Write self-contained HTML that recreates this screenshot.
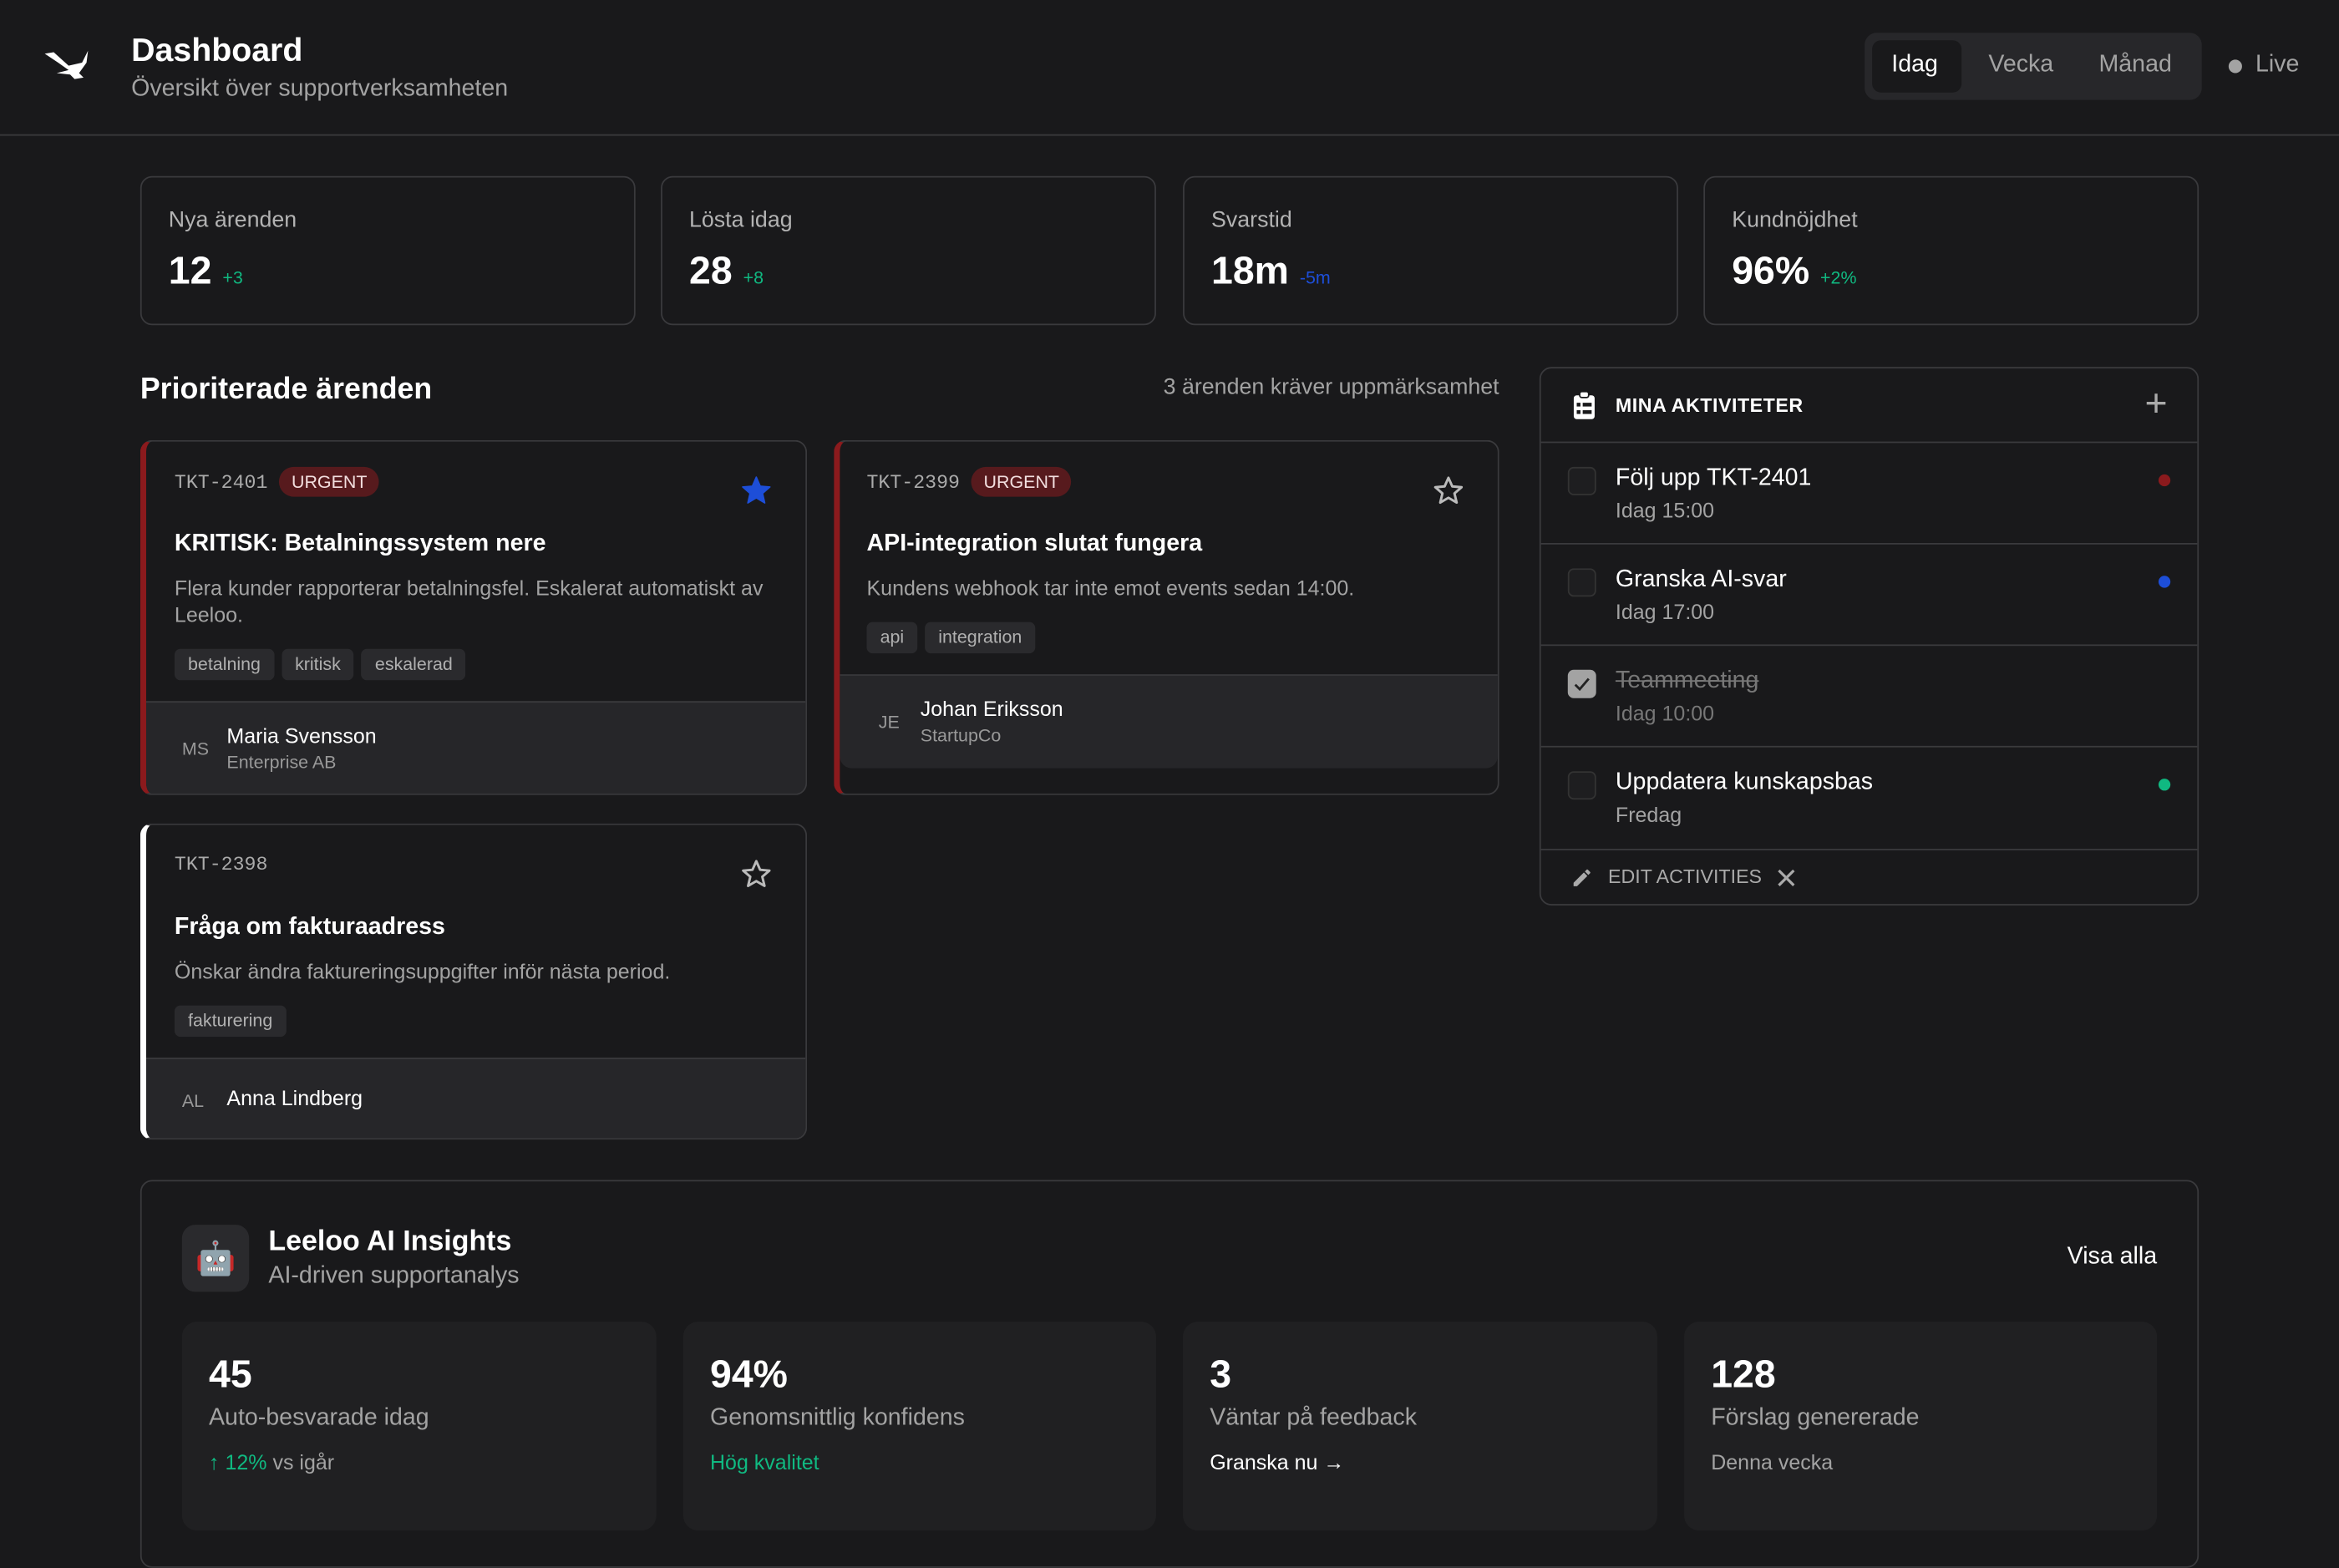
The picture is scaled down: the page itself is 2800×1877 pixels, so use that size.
<!DOCTYPE html>
<html><head><meta charset="utf-8"><style>
*{box-sizing:border-box;margin:0;padding:0}
html,body{width:2800px;height:1800px;overflow:hidden;background:#19191b}
#w{position:absolute;left:0;top:0;width:1568px;height:1008px;transform:scale(1.78571);transform-origin:0 0;font-family:"Liberation Sans","Noto Sans CJK JP",sans-serif;color:#fff}
.a{position:absolute;white-space:nowrap}
.g{color:#a3a3a3}
.card{position:absolute;border:1px solid #3a3a3d;border-radius:8px}
.lbl{font-size:15px;color:#b3b3b3}
.val{font-size:26px;font-weight:700}
.tag{display:inline-block;background:#2a2a2d;color:#b0b0b0;font-size:12px;height:21px;line-height:21px;padding:0 9px;border-radius:4px;margin-right:5px}
.urg{display:inline-block;background:#571a1d;color:#f2dede;font-size:12px;height:20px;line-height:20px;padding:0 8px;border-radius:10px;margin-left:8px}
.mono{font-family:"Liberation Mono",monospace;font-size:13px;color:#aaa}
.row{position:absolute;left:0;right:0;border-top:1px solid #3a3a3d}
.cb{position:absolute;left:18px;width:19px;height:19px;border:1px solid #333;border-radius:4px;background:#1e1e20}
.dot{position:absolute;right:18px;width:8px;height:8px;border-radius:50%}
.ic{position:absolute;background:#202022;border-radius:10px;height:140px;top:886px}
</style></head><body><div id="w">
<!-- header -->
<svg class="a" style="left:26px;top:30px" width="36" height="28" viewBox="0 0 36 28"><path d="M4 6 L10 5 L20 14 L29 12 L33 4 L32 12 L27 19 L30 22 L24 23 L21 20 L12 19 L20 17 L13 12 Z" fill="#fff"/></svg>
<div class="a" style="left:88px;top:21px;font-size:22px;font-weight:700">Dashboard</div>
<div class="a g" style="left:88px;top:51px;font-size:16px">Översikt över supportverksamheten</div>
<div class="a" style="left:1250px;top:22px;width:226px;height:45px;background:#27272a;border-radius:8px"></div>
<div class="a" style="left:1255px;top:27px;width:60px;height:35px;background:#19191b;border-radius:6px"></div>
<div class="a" style="left:1268px;top:35px;font-size:16px">Idag</div>
<div class="a g" style="left:1333px;top:35px;font-size:16px">Vecka</div>
<div class="a g" style="left:1407px;top:35px;font-size:16px">Månad</div>
<div class="a" style="left:1494px;top:40px;width:9px;height:9px;border-radius:50%;background:#a3a3a3"></div>
<div class="a g" style="left:1512px;top:35px;font-size:16px">Live</div>
<div class="a" style="left:0;top:90px;width:1568px;height:1px;background:#3a3a3d"></div>
<!-- stats -->
<div class="card" style="left:94px;top:118px;width:332px;height:100px"><div class="a lbl" style="left:18px;top:20px">Nya ärenden</div><div class="a val" style="left:18px;top:47px">12 <span style="font-size:12px;color:#10b981;font-weight:400">+3</span></div></div>
<div class="card" style="left:443px;top:118px;width:332px;height:100px"><div class="a lbl" style="left:18px;top:20px">Lösta idag</div><div class="a val" style="left:18px;top:47px">28 <span style="font-size:12px;color:#10b981;font-weight:400">+8</span></div></div>
<div class="card" style="left:793px;top:118px;width:332px;height:100px"><div class="a lbl" style="left:18px;top:20px">Svarstid</div><div class="a val" style="left:18px;top:47px">18m <span style="font-size:12px;color:#1d4ed8;font-weight:400">-5m</span></div></div>
<div class="card" style="left:1142px;top:118px;width:332px;height:100px"><div class="a lbl" style="left:18px;top:20px">Kundnöjdhet</div><div class="a val" style="left:18px;top:47px">96% <span style="font-size:12px;color:#10b981;font-weight:400">+2%</span></div></div>
<!-- prioriterade -->
<div class="a" style="left:94px;top:250px;font-size:20px;font-weight:700">Prioriterade ärenden</div>
<div class="a g" style="right:563px;top:251px;font-size:15px">3 ärenden kräver uppmärksamhet</div>
<!-- card1 -->
<div class="card" style="left:94px;top:295px;width:447px;height:238px;border-left:4px solid #8b1a1d;overflow:hidden">
 <div class="a" style="left:19px;top:17px"><span class="mono">TKT-2401</span><span class="urg">URGENT</span></div>
 <svg class="a" style="right:22px;top:22px" width="22" height="22" viewBox="0 0 24 24"><path d="M12 2l2.9 6.6 7.1.6-5.4 4.7 1.6 7-6.2-3.7-6.2 3.7 1.6-7L2 9.2l7.1-.6z" fill="#1d4ed8" stroke="#1d4ed8" stroke-linejoin="round"/></svg>
 <div class="a" style="left:19px;top:60px;font-size:16px;font-weight:700">KRITISK: Betalningssystem nere</div>
 <div class="a g" style="left:19px;top:89px;font-size:14px;line-height:18px;white-space:normal;width:412px">Flera kunder rapporterar betalningsfel. Eskalerat automatiskt av Leeloo.</div>
 <div class="a" style="left:19px;top:139px"><span class="tag">betalning</span><span class="tag">kritisk</span><span class="tag">eskalerad</span></div>
 <div class="a" style="left:0;right:0;top:174px;bottom:0;background:#262629;border-top:1px solid #3a3a3d">
  <div class="a" style="left:24px;top:24px;font-size:12px;color:#999">MS</div>
  <div class="a" style="left:54px;top:14px;font-size:14px">Maria Svensson</div>
  <div class="a" style="left:54px;top:33px;font-size:12px;color:#999">Enterprise AB</div>
 </div>
</div>
<!-- card2 -->
<div class="card" style="left:559px;top:295px;width:446px;height:238px;border-left:4px solid #8b1a1d">
 <div class="a" style="left:18px;top:17px"><span class="mono">TKT-2399</span><span class="urg">URGENT</span></div>
 <svg class="a" style="right:22px;top:22px" width="22" height="22" viewBox="0 0 24 24"><path d="M12 2.5l2.8 6.3 6.8.6-5.2 4.5 1.6 6.7L12 17.1l-6 3.5 1.6-6.7-5.2-4.5 6.8-.6z" fill="none" stroke="#bbb" stroke-width="1.8" stroke-linejoin="round"/></svg>
 <div class="a" style="left:18px;top:60px;font-size:16px;font-weight:700">API-integration slutat fungera</div>
 <div class="a g" style="left:18px;top:90px;font-size:14px">Kundens webhook tar inte emot events sedan 14:00.</div>
 <div class="a" style="left:18px;top:121px"><span class="tag">api</span><span class="tag">integration</span></div>
 <div class="a" style="left:0;right:0;top:156px;height:63px;background:#262629;border-top:1px solid #3a3a3d;border-radius:0 0 8px 8px">
  <div class="a" style="left:26px;top:24px;font-size:12px;color:#999">JE</div>
  <div class="a" style="left:54px;top:14px;font-size:14px">Johan Eriksson</div>
  <div class="a" style="left:54px;top:33px;font-size:12px;color:#999">StartupCo</div>
 </div>
</div>
<!-- card3 -->
<div class="card" style="left:94px;top:552px;width:447px;height:212px;border-left:4px solid #fff;overflow:hidden">
 <div class="a" style="left:19px;top:17px"><span class="mono">TKT-2398</span></div>
 <svg class="a" style="right:22px;top:22px" width="22" height="22" viewBox="0 0 24 24"><path d="M12 2.5l2.8 6.3 6.8.6-5.2 4.5 1.6 6.7L12 17.1l-6 3.5 1.6-6.7-5.2-4.5 6.8-.6z" fill="none" stroke="#bbb" stroke-width="1.8" stroke-linejoin="round"/></svg>
 <div class="a" style="left:19px;top:60px;font-size:16px;font-weight:700">Fråga om fakturaadress</div>
 <div class="a g" style="left:19px;top:90px;font-size:14px">Önskar ändra faktureringsuppgifter inför nästa period.</div>
 <div class="a" style="left:19px;top:121px"><span class="tag">fakturering</span></div>
 <div class="a" style="left:0;right:0;top:156px;bottom:0;background:#262629;border-top:1px solid #3a3a3d">
  <div class="a" style="left:24px;top:21px;font-size:12px;color:#999">AL</div>
  <div class="a" style="left:54px;top:18px;font-size:14px">Anna Lindberg</div>
 </div>
</div>
<!-- activities -->
<div class="card" style="left:1032px;top:246px;width:442px;height:361px">
 <svg class="a" style="left:21px;top:15px" width="16" height="20" viewBox="0 0 16 20"><rect x="1" y="3" width="14" height="16" rx="2" fill="#fff"/><rect x="5" y="0.5" width="6" height="4" rx="1.5" fill="#fff" stroke="#19191b" stroke-width="1"/><rect x="3" y="8" width="2.5" height="2.5" fill="#19191b"/><rect x="7" y="8" width="6" height="2.5" fill="#19191b"/><rect x="3" y="13" width="2.5" height="2.5" fill="#19191b"/><rect x="7" y="13" width="6" height="2.5" fill="#19191b"/></svg>
 <div class="a" style="left:50px;top:17px;font-size:13px;font-weight:700;letter-spacing:.3px">MINA AKTIVITETER</div>
 <div class="a" style="right:20px;top:8px;font-size:26px;color:#aaa;font-weight:300">+</div>
 <div class="row" style="top:49px;height:69px"><div class="cb" style="top:16px"></div><div class="a" style="left:50px;top:15px;font-size:16px">Följ upp TKT-2401</div><div class="a g" style="left:50px;top:37px;font-size:14px">Idag 15:00</div><div class="dot" style="top:21px;background:#8b1a1d"></div></div>
 <div class="row" style="top:117px;height:69px"><div class="cb" style="top:16px"></div><div class="a" style="left:50px;top:15px;font-size:16px">Granska AI-svar</div><div class="a g" style="left:50px;top:37px;font-size:14px">Idag 17:00</div><div class="dot" style="top:21px;background:#1d4ed8"></div></div>
 <div class="row" style="top:185px;height:69px"><div class="cb" style="top:16px;background:#a3a3a3;border-color:#a3a3a3"><svg width="17" height="17" viewBox="0 0 17 17"><path d="M4 9l3 3 6-7" fill="none" stroke="#222" stroke-width="1.6"/></svg></div><div class="a" style="left:50px;top:15px;font-size:16px;color:#777;text-decoration:line-through">Teammeeting</div><div class="a" style="left:50px;top:37px;font-size:14px;color:#777">Idag 10:00</div></div>
 <div class="row" style="top:253px;height:69px"><div class="cb" style="top:16px"></div><div class="a" style="left:50px;top:15px;font-size:16px">Uppdatera kunskapsbas</div><div class="a g" style="left:50px;top:37px;font-size:14px">Fredag</div><div class="dot" style="top:21px;background:#10b981"></div></div>
 <div class="row" style="top:322px;height:38px">
  <svg class="a" style="left:20px;top:11px" width="15" height="15" viewBox="0 0 24 24"><path d="M3 17.25V21h3.75L17.81 9.94l-3.75-3.75L3 17.25zM20.71 7.04a1 1 0 000-1.41l-2.34-2.34a1 1 0 00-1.41 0l-1.83 1.83 3.75 3.75 1.83-1.83z" fill="#aaa"/></svg>
  <div class="a" style="left:45px;top:10px;font-size:13px;color:#aaa">EDIT ACTIVITIES</div>
  <svg class="a" style="left:158px;top:12px" width="13" height="13" viewBox="0 0 13 13"><path d="M1.5 1.5l10 10M11.5 1.5l-10 10" stroke="#aaa" stroke-width="1.8"/></svg>
 </div>
</div>
<!-- AI -->
<div class="card" style="left:94px;top:791px;width:1380px;height:260px"></div>
<div class="a" style="left:122px;top:821px;width:45px;height:45px;background:#2a2a2d;border-radius:9px;font-size:22px;text-align:center;line-height:45px">🤖</div>
<div class="a" style="left:180px;top:822px;font-size:19px;font-weight:700">Leeloo AI Insights</div>
<div class="a g" style="left:180px;top:847px;font-size:16px">AI-driven supportanalys</div>
<div class="a" style="right:122px;top:834px;font-size:16px">Visa alla</div>
<div class="ic" style="left:122px;width:318px"><div class="a val" style="left:18px;top:20px">45</div><div class="a g" style="left:18px;top:56px;font-size:16px">Auto-besvarade idag</div><div class="a" style="left:18px;top:86px;font-size:14px;color:#10b981">↑ 12% <span class="g">vs igår</span></div></div>
<div class="ic" style="left:458px;width:317px"><div class="a val" style="left:18px;top:20px">94%</div><div class="a g" style="left:18px;top:56px;font-size:16px">Genomsnittlig konfidens</div><div class="a" style="left:18px;top:86px;font-size:14px;color:#10b981">Hög kvalitet</div></div>
<div class="ic" style="left:793px;width:318px"><div class="a val" style="left:18px;top:20px">3</div><div class="a g" style="left:18px;top:56px;font-size:16px">Väntar på feedback</div><div class="a" style="left:18px;top:86px;font-size:14px">Granska nu →</div></div>
<div class="ic" style="left:1129px;width:317px"><div class="a val" style="left:18px;top:20px">128</div><div class="a g" style="left:18px;top:56px;font-size:16px">Förslag genererade</div><div class="a g" style="left:18px;top:86px;font-size:14px">Denna vecka</div></div>
</div></body></html>
